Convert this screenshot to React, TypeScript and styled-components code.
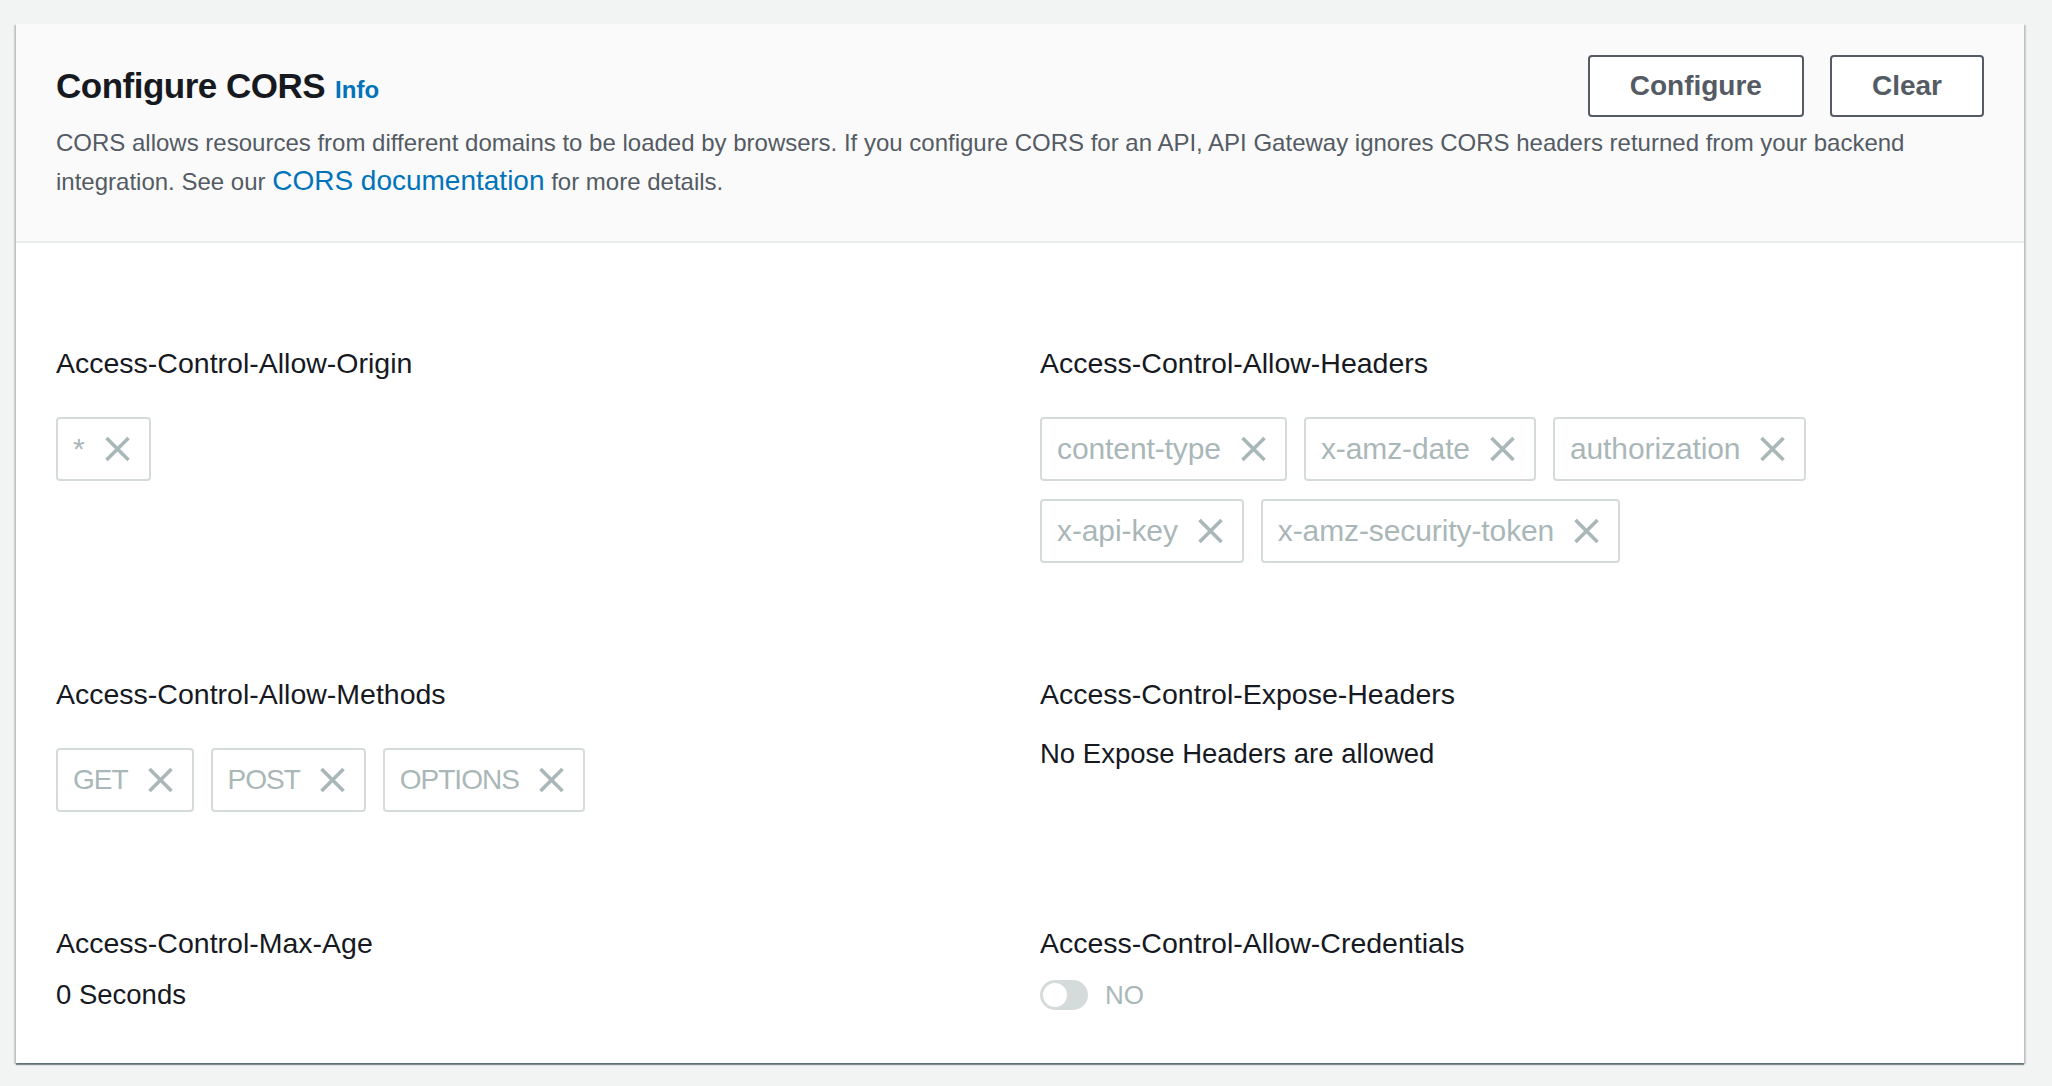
import React from 'react';
import styled, { createGlobalStyle } from 'styled-components';

const GlobalStyle = createGlobalStyle`
  html, body {
    margin: 0;
    padding: 0;
    background: #f2f3f3;
  }
  body {
    font-family: "Liberation Sans", Arial, sans-serif;
    -webkit-font-smoothing: antialiased;
  }
  * { box-sizing: border-box; }
`;

const Page = styled.div`
  min-height: 1086px;
  padding: 24px 28px 24px 16px;
`;

const Card = styled.section`
  background: #ffffff;
  box-shadow: 0 2px 1px 0 rgba(0, 28, 36, 0.45), 2px 1px 1px 0 rgba(0, 28, 36, 0.15),
    -2px 1px 1px 0 rgba(0, 28, 36, 0.15);
`;

const Header = styled.header`
  background: #fafafa;
  border-bottom: 2px solid #eaeded;
  padding: 31px 40px 40px;
`;

const TitleRow = styled.div`
  display: flex;
  align-items: center;
  justify-content: space-between;
  height: 62px;
`;

const TitleGroup = styled.div`
  display: flex;
  align-items: baseline;
  gap: 10px;
`;

const Title = styled.h2`
  margin: 0;
  font-size: 35px;
  font-weight: 700;
  letter-spacing: -0.5px;
  color: #16191f;
`;

const InfoLink = styled.a`
  font-size: 24px;
  font-weight: 700;
  color: #0073bb;
  text-decoration: none;
`;

const Actions = styled.div`
  display: flex;
  gap: 26px;
`;

const Button = styled.button`
  height: 62px;
  padding: 0 40px;
  border: 2px solid #545b64;
  border-radius: 4px;
  background: #ffffff;
  color: #545b64;
  font-family: "Liberation Sans", Arial, sans-serif;
  font-size: 28px;
  font-weight: 700;
  cursor: pointer;
`;

const Description = styled.p`
  margin: 7px 0 0;
  font-size: 24px;
  line-height: 38px;
  color: #545b64;
`;

const DocLink = styled.a`
  font-size: 28px;
  color: #0073bb;
  text-decoration: none;
`;

const Body = styled.div`
  display: grid;
  grid-template-columns: 1fr 1fr;
  column-gap: 40px;
  row-gap: 109px;
  padding: 98px 40px 46px;
`;

const Field = styled.div`
  display: flex;
  flex-direction: column;
  align-items: flex-start;
`;

const Label = styled.div`
  font-size: 28.5px;
  line-height: 44px;
  color: #16191f;
`;

const TokenList = styled.div`
  display: flex;
  flex-wrap: wrap;
  gap: 18px 17px;
  margin-top: 32px;
`;

const Token = styled.div<{ $caps?: boolean }>`
  display: inline-flex;
  align-items: center;
  gap: 19px;
  height: 64px;
  padding: 0 18px 0 15px;
  border: 2px solid #d5dbdb;
  border-radius: 4px;
  background: #ffffff;
  color: #aab7b8;
  font-size: ${(p) => (p.$caps ? '28px' : '30px')};
  letter-spacing: ${(p) => (p.$caps ? '-1px' : '-0.1px')};
`;

const Value = styled.div<{ $offset: number }>`
  margin-top: ${(p) => p.$offset}px;
  font-size: 27.5px;
  line-height: 44px;
  color: #16191f;
`;

const ToggleRow = styled.div`
  display: flex;
  align-items: center;
  gap: 17px;
  height: 44px;
  margin-top: 8px;
`;

const Track = styled.span`
  display: inline-flex;
  align-items: center;
  width: 48px;
  height: 30px;
  padding: 0 3px;
  border-radius: 15px;
  background: #d5dbdb;
`;

const Knob = styled.span`
  width: 24px;
  height: 24px;
  border-radius: 50%;
  background: #ffffff;
`;

const ToggleText = styled.span`
  font-size: 26px;
  color: #aab7b8;
`;

const CloseIcon = () => (
  <svg width="27" height="26" viewBox="0 0 27 26" aria-hidden="true">
    <path d="M2.5 2 L24.5 24 M24.5 2 L2.5 24" stroke="#aab7b8" strokeWidth="3.6" fill="none" />
  </svg>
);

const TokenGroup = ({ items, caps }: { items: string[]; caps?: boolean }) => (
  <TokenList>
    {items.map((t) => (
      <Token key={t} $caps={caps}>
        <span>{t}</span>
        <CloseIcon />
      </Token>
    ))}
  </TokenList>
);

export default function App() {
  return (
    <>
      <GlobalStyle />
      <Page>
        <Card>
          <Header>
            <TitleRow>
              <TitleGroup>
                <Title>Configure CORS</Title>
                <InfoLink href="#">Info</InfoLink>
              </TitleGroup>
              <Actions>
                <Button>Configure</Button>
                <Button>Clear</Button>
              </Actions>
            </TitleRow>
            <Description>
              <span>
                CORS allows resources from different domains to be loaded by browsers. If you configure CORS for an
                API, API Gateway ignores CORS headers returned from your backend
              </span>{' '}
              <span>integration. See our</span> <DocLink href="#">CORS documentation</DocLink>{' '}
              <span>for more details.</span>
            </Description>
          </Header>
          <Body>
            <Field>
              <Label>Access-Control-Allow-Origin</Label>
              <TokenGroup items={['*']} />
            </Field>
            <Field>
              <Label>Access-Control-Allow-Headers</Label>
              <TokenGroup
                items={['content-type', 'x-amz-date', 'authorization', 'x-api-key', 'x-amz-security-token']}
              />
            </Field>
            <Field>
              <Label>Access-Control-Allow-Methods</Label>
              <TokenGroup items={['GET', 'POST', 'OPTIONS']} caps />
            </Field>
            <Field>
              <Label>Access-Control-Expose-Headers</Label>
              <Value $offset={16}>No Expose Headers are allowed</Value>
            </Field>
            <Field>
              <Label>Access-Control-Max-Age</Label>
              <Value $offset={8}>0 Seconds</Value>
            </Field>
            <Field>
              <Label>Access-Control-Allow-Credentials</Label>
              <ToggleRow>
                <Track>
                  <Knob />
                </Track>
                <ToggleText>NO</ToggleText>
              </ToggleRow>
            </Field>
          </Body>
        </Card>
      </Page>
    </>
  );
}
